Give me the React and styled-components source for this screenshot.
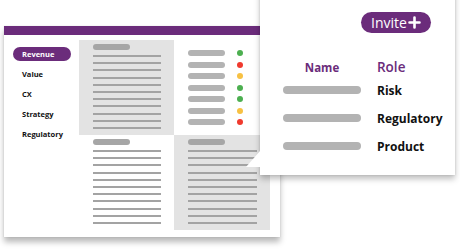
import React from "react";
import styled, { createGlobalStyle } from "styled-components";

const purple = "#6b2c7b";

const GlobalStyle = createGlobalStyle`
  html, body {
    margin: 0;
    padding: 0;
    background: #ffffff;
    font-family: "Open Sans", "Liberation Sans", sans-serif;
  }
`;

const Stage = styled.div`
  position: relative;
  width: 460px;
  height: 250px;
  overflow: hidden;
  background: #ffffff;
`;

const Dashboard = styled.div`
  margin: 26px 0 0 4px;
  width: 276px;
  height: 211px;
  background: #ffffff;
  box-shadow: 0 5px 6px rgba(0, 0, 0, 0.28), 0 0 1px rgba(0, 0, 0, 0.15);
  display: flex;
  flex-direction: column;
`;

const HeaderBar = styled.div`
  height: 9px;
  background: ${purple};
`;

const Body = styled.div`
  display: flex;
  padding: 5px 10px 7px 0;
`;

const Sidebar = styled.div`
  width: 75px;
  padding: 7px 0 0 9px;
  box-sizing: border-box;
  display: flex;
  flex-direction: column;
  gap: 6px;
`;

const NavItem = styled.div`
  width: 58px;
  height: 14px;
  border-radius: 7px;
  box-sizing: border-box;
  padding-left: 9px;
  display: flex;
  align-items: center;
  font-size: 7.5px;
  font-weight: 700;
  color: ${(p) => (p.$active ? "#ffffff" : "#111111")};
  background: ${(p) => (p.$active ? purple : "transparent")};
`;

const Grid = styled.div`
  display: grid;
  grid-template-columns: 95px 96px;
  grid-template-rows: 95px 95px;
`;

const Quad = styled.div`
  background: ${(p) => (p.$shade ? "#e3e3e3" : "#ffffff")};
  padding: 4px 0 0 14px;
  box-sizing: border-box;
`;

const TitlePill = styled.div`
  width: 37px;
  height: 6px;
  border-radius: 3px;
  background: #a6a6a6;
  margin-bottom: 5px;
`;

const Line = styled.div`
  width: ${(p) => p.$w || 68}px;
  height: 2px;
  background: #a3a3a3;
  margin-bottom: 5.2px;
`;

const StatusList = styled.div`
  display: flex;
  flex-direction: column;
  gap: 5.5px;
  padding-top: 6px;
`;

const StatusRow = styled.div`
  display: flex;
  align-items: center;
  gap: 12px;
`;

const StatusPill = styled.div`
  width: 37px;
  height: 6px;
  border-radius: 3px;
  background: #b3b3b3;
`;

const Dot = styled.div`
  width: 6px;
  height: 6px;
  border-radius: 50%;
  background: ${(p) => p.$color};
`;

const Popover = styled.div`
  position: absolute;
  left: 260px;
  top: -10px;
  width: 195px;
  height: 185px;
  background: #ffffff;
  box-shadow: 0 4px 6px rgba(0, 0, 0, 0.25), 0 0 2px rgba(0, 0, 0, 0.12);
  box-sizing: border-box;
  padding: 22px 24px 0 23px;
  display: flex;
  flex-direction: column;
`;

const Tail = styled.svg`
  position: absolute;
  left: -14px;
  bottom: 8px;
  overflow: visible;
`;

const InviteButton = styled.div`
  align-self: flex-end;
  height: 21px;
  width: 70px;
  border-radius: 11px;
  background: ${purple};
  color: #ffffff;
  font-size: 14px;
  font-weight: 500;
  display: flex;
  align-items: center;
  justify-content: center;
  gap: 1px;
`;

const Table = styled.div`
  margin-top: 25px;
  display: grid;
  grid-template-columns: 78px auto;
  grid-template-rows: 18px 28px 28px 28px;
  column-gap: 16px;
  align-items: center;
`;

const HeadCell = styled.div`
  color: ${purple};
  font-size: ${(p) => (p.$large ? 13.5 : 11.5)}px;
  font-weight: ${(p) => (p.$large ? 600 : 700)};
  text-align: ${(p) => (p.$center ? "center" : "left")};
`;

const NamePill = styled.div`
  height: 8px;
  border-radius: 4px;
  background: #b3b3b3;
`;

const RoleCell = styled.div`
  font-size: 12px;
  font-weight: 700;
  color: #111111;
`;

const navItems = ["Revenue", "Value", "CX", "Strategy", "Regulatory"];
const statuses = ["#4caf50", "#f03a2e", "#f7c143", "#4caf50", "#4caf50", "#f7c143", "#f03a2e"];
const roles = ["Risk", "Regulatory", "Product"];

const TextQuad = ({ shade, width }) => (
  <Quad $shade={shade}>
    <TitlePill />
    {Array.from({ length: 11 }).map((_, i) => (
      <Line key={i} $w={width} />
    ))}
  </Quad>
);

export default function App() {
  return (
    <Stage>
      <GlobalStyle />
      <Dashboard>
        <HeaderBar />
        <Body>
          <Sidebar>
            {navItems.map((item, i) => (
              <NavItem key={item} $active={i === 0}>
                {item}
              </NavItem>
            ))}
          </Sidebar>
          <Grid>
            <TextQuad shade />
            <Quad>
              <StatusList>
                {statuses.map((c, i) => (
                  <StatusRow key={i}>
                    <StatusPill />
                    <Dot $color={c} />
                  </StatusRow>
                ))}
              </StatusList>
            </Quad>
            <TextQuad />
            <TextQuad shade width={69} />
          </Grid>
        </Body>
      </Dashboard>

      <Popover>
        <Tail width="14" height="16" viewBox="0 0 14 16">
          <polygon points="14,0 14,16 0,16" fill="#ffffff" />
        </Tail>
        <InviteButton>
          Invite
          <svg width="13" height="13" viewBox="0 0 13 13">
            <path d="M6.5 1.5v10M1.5 6.5h10" stroke="#fff" strokeWidth="2.6" strokeLinecap="round" />
          </svg>
        </InviteButton>
        <Table>
          <HeadCell $center>Name</HeadCell>
          <HeadCell $large>Role</HeadCell>
          {roles.map((r) => (
            <React.Fragment key={r}>
              <NamePill />
              <RoleCell>{r}</RoleCell>
            </React.Fragment>
          ))}
        </Table>
      </Popover>
    </Stage>
  );
}
